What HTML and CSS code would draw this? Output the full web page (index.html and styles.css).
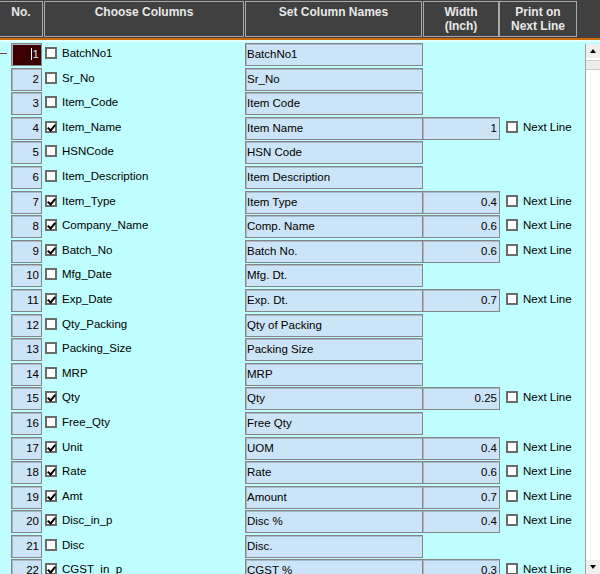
FILE: index.html
```html
<!DOCTYPE html>
<html lang="en">
<head>
  <meta charset="UTF-8">
  <meta name="viewport" content="width=device-width, initial-scale=1.0">
  <link rel="stylesheet" href="styles.css">
  <title>Choose Columns</title>
</head>
<body>
  <div id="column_setup">
    <div class="gridHead">
      <div class="headCell colNo">No.</div>
      <div class="headCell colPick">Choose Columns</div>
      <div class="headCell colName">Set Column Names</div>
      <div class="headCell colWidth">Width<br>(Inch)</div>
      <div class="headCell colPrint">Print on<br>Next Line</div>
    </div>
    <div class="headLine"></div>

    <div class="gridBody">
      <div class="rows">
        <div class="row current">
          <span class="rowMark"></span>
          <span class="txtNo focus"><i class="caret"></i>1</span>
          <label class="pick"><span class="chk"></span>BatchNo1</label>
          <span class="txtName">BatchNo1</span>
        </div>
        <div class="row">
          <span class="txtNo">2</span>
          <label class="pick"><span class="chk"></span>Sr_No</label>
          <span class="txtName">Sr_No</span>
        </div>
        <div class="row">
          <span class="txtNo">3</span>
          <label class="pick"><span class="chk"></span>Item_Code</label>
          <span class="txtName">Item Code</span>
        </div>
        <div class="row">
          <span class="txtNo">4</span>
          <label class="pick"><span class="chk on"></span>Item_Name</label>
          <span class="txtName">Item Name</span>
          <span class="txtWidth">1</span>
          <label class="next"><span class="chk"></span>Next Line</label>
        </div>
        <div class="row">
          <span class="txtNo">5</span>
          <label class="pick"><span class="chk"></span>HSNCode</label>
          <span class="txtName">HSN Code</span>
        </div>
        <div class="row">
          <span class="txtNo">6</span>
          <label class="pick"><span class="chk"></span>Item_Description</label>
          <span class="txtName">Item Description</span>
        </div>
        <div class="row">
          <span class="txtNo">7</span>
          <label class="pick"><span class="chk on"></span>Item_Type</label>
          <span class="txtName">Item Type</span>
          <span class="txtWidth">0.4</span>
          <label class="next"><span class="chk"></span>Next Line</label>
        </div>
        <div class="row">
          <span class="txtNo">8</span>
          <label class="pick"><span class="chk on"></span>Company_Name</label>
          <span class="txtName">Comp. Name</span>
          <span class="txtWidth">0.6</span>
          <label class="next"><span class="chk"></span>Next Line</label>
        </div>
        <div class="row">
          <span class="txtNo">9</span>
          <label class="pick"><span class="chk on"></span>Batch_No</label>
          <span class="txtName">Batch No.</span>
          <span class="txtWidth">0.6</span>
          <label class="next"><span class="chk"></span>Next Line</label>
        </div>
        <div class="row">
          <span class="txtNo">10</span>
          <label class="pick"><span class="chk"></span>Mfg_Date</label>
          <span class="txtName">Mfg. Dt.</span>
        </div>
        <div class="row">
          <span class="txtNo">11</span>
          <label class="pick"><span class="chk on"></span>Exp_Date</label>
          <span class="txtName">Exp. Dt.</span>
          <span class="txtWidth">0.7</span>
          <label class="next"><span class="chk"></span>Next Line</label>
        </div>
        <div class="row">
          <span class="txtNo">12</span>
          <label class="pick"><span class="chk"></span>Qty_Packing</label>
          <span class="txtName">Qty of Packing</span>
        </div>
        <div class="row">
          <span class="txtNo">13</span>
          <label class="pick"><span class="chk"></span>Packing_Size</label>
          <span class="txtName">Packing Size</span>
        </div>
        <div class="row">
          <span class="txtNo">14</span>
          <label class="pick"><span class="chk"></span>MRP</label>
          <span class="txtName">MRP</span>
        </div>
        <div class="row">
          <span class="txtNo">15</span>
          <label class="pick"><span class="chk on"></span>Qty</label>
          <span class="txtName">Qty</span>
          <span class="txtWidth">0.25</span>
          <label class="next"><span class="chk"></span>Next Line</label>
        </div>
        <div class="row">
          <span class="txtNo">16</span>
          <label class="pick"><span class="chk"></span>Free_Qty</label>
          <span class="txtName">Free Qty</span>
        </div>
        <div class="row">
          <span class="txtNo">17</span>
          <label class="pick"><span class="chk on"></span>Unit</label>
          <span class="txtName">UOM</span>
          <span class="txtWidth">0.4</span>
          <label class="next"><span class="chk"></span>Next Line</label>
        </div>
        <div class="row">
          <span class="txtNo">18</span>
          <label class="pick"><span class="chk on"></span>Rate</label>
          <span class="txtName">Rate</span>
          <span class="txtWidth">0.6</span>
          <label class="next"><span class="chk"></span>Next Line</label>
        </div>
        <div class="row">
          <span class="txtNo">19</span>
          <label class="pick"><span class="chk on"></span>Amt</label>
          <span class="txtName">Amount</span>
          <span class="txtWidth">0.7</span>
          <label class="next"><span class="chk"></span>Next Line</label>
        </div>
        <div class="row">
          <span class="txtNo">20</span>
          <label class="pick"><span class="chk on"></span>Disc_in_p</label>
          <span class="txtName">Disc %</span>
          <span class="txtWidth">0.4</span>
          <label class="next"><span class="chk"></span>Next Line</label>
        </div>
        <div class="row">
          <span class="txtNo">21</span>
          <label class="pick"><span class="chk"></span>Disc</label>
          <span class="txtName">Disc.</span>
        </div>
        <div class="row">
          <span class="txtNo">22</span>
          <label class="pick"><span class="chk on"></span>CGST_in_p</label>
          <span class="txtName">CGST %</span>
          <span class="txtWidth">0.3</span>
          <label class="next"><span class="chk"></span>Next Line</label>
        </div>
      </div>

      <div class="scrollBar">
        <div class="sbBtn"><span class="arrowUp"></span></div>
        <div class="sbThumb"></div>
        <div class="sbTrack"></div>
        <div class="sbBtn"><span class="arrowDown"></span></div>
      </div>
    </div>
  </div>
</body>
</html>
```

FILE: styles.css
```css
body {
  margin: 0;
  font-family: "Liberation Sans", Arial, sans-serif;
  font-size: 11.5px;
  color: #000000;
}
#column_setup {
  width: 600px;
  height: 574px;
  overflow: hidden;
  display: flex;
  flex-direction: column;
  background: #bfffff;
}

/* header */
.gridHead {
  height: 38px;
  padding-top: 1px;
  box-sizing: border-box;
  display: flex;
  background: #404040;
}
.headCell {
  height: 36px;
  box-sizing: border-box;
  border: 1px solid #a9a9a9;
  padding-top: 3px;
  color: #e8e8e8;
  font-size: 12px;
  font-weight: bold;
  line-height: 14px;
  text-align: center;
}
.colNo { width: 43px; border-left: 0; }
.colPick { width: 200px; margin-left: 1px; }
.colName { width: 177px; margin-left: 1px; }
.colWidth { width: 76px; margin-left: 1px; }
.colPrint { width: 78px; }

.headLine {
  height: 2px;
  background: #cc6a10;
  border-bottom: 2px solid #e4ffff;
}

/* rows */
.gridBody {
  flex: 1;
  display: flex;
  min-height: 0;
}
.rows {
  flex: 1;
  padding-top: 1px;
}
.row {
  position: relative;
  height: 24.6px;
  padding-left: 11px;
  display: grid;
  grid-template-columns: 31px 203px 178px 77px auto;
  align-items: start;
}
.txtNo, .txtName, .txtWidth {
  height: 23px;
  box-sizing: border-box;
  border: 1px solid #858585;
  box-shadow: inset 1px 1px 0 #a9b9c8;
  background: #cce4f7;
  line-height: 20px;
  white-space: nowrap;
  overflow: hidden;
}
.txtNo {
  grid-column: 1;
  text-align: right;
  padding-right: 2px;
}
.txtNo.focus {
  background: #3c0000;
  color: #cfe3ff;
}
.caret {
  display: inline-block;
  width: 1px;
  height: 12px;
  margin-right: 1px;
  vertical-align: -2px;
  background: #ffffff;
}
.rowMark {
  position: absolute;
  left: 0;
  top: 10px;
  width: 7px;
  height: 1px;
  background: #7c3434;
}
.pick {
  grid-column: 2;
  display: flex;
  align-items: center;
  height: 20px;
  padding-left: 3px;
}
.txtName {
  grid-column: 3;
  padding-left: 1px;
}
.txtWidth {
  grid-column: 4;
  margin-left: -1px;
  text-align: right;
  padding-right: 2px;
}
.next {
  grid-column: 5;
  display: flex;
  align-items: center;
  height: 20px;
  padding-left: 6px;
}
.chk {
  width: 12px;
  height: 12px;
  box-sizing: border-box;
  border: 2px solid #6b6b6b;
  background: #ffffff;
  margin-right: 5px;
  position: relative;
}
.chk.on::after {
  content: "";
  position: absolute;
  left: 2px;
  top: 0px;
  width: 3px;
  height: 6px;
  border: solid #000000;
  border-width: 0 2px 2px 0;
  transform: rotate(40deg);
}

/* scroll bar */
.scrollBar {
  width: 14px;
  margin-top: 2px;
  border-left: 1px solid #a0a0a0;
  display: flex;
  flex-direction: column;
  background: #ffffff;
}
.sbBtn {
  height: 14px;
  background: #f0f0f0;
  display: flex;
  align-items: center;
  justify-content: center;
}
.sbThumb {
  height: 8px;
  margin-top: 2px;
  background: #ececec;
  border-top: 1px solid #cdcdcd;
  border-bottom: 1px solid #cdcdcd;
}
.sbTrack {
  flex: 1;
}
.arrowUp, .arrowDown {
  width: 0;
  height: 0;
  border-left: 3px solid transparent;
  border-right: 3px solid transparent;
}
.arrowUp { border-bottom: 4px solid #000000; }
.arrowDown { border-top: 4px solid #000000; }
```
